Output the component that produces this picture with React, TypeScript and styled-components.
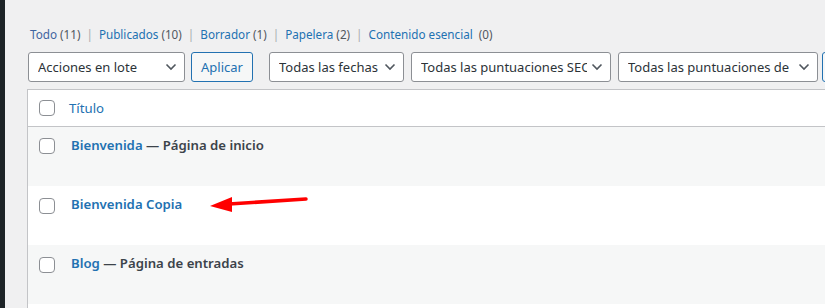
import React from 'react'
import styled, { createGlobalStyle } from 'styled-components'

const GlobalStyle = createGlobalStyle`
  html, body {
    margin: 0;
    padding: 0;
    background: #f0f0f1;
    font-family: "Noto Sans", "Open Sans", sans-serif;
    color: #3c434a;
    overflow: hidden;
  }
`

const Page = styled.div`
  display: flex;
  width: 825px;
  height: 308px;
  overflow: hidden;
`

const AdminMenu = styled.div`
  width: 5px;
  flex-shrink: 0;
  background: #1d2327;
`

const Content = styled.div`
  position: relative;
  flex: 1;
  padding: 25px 0 0 22px;
  min-width: 0;
`

const Views = styled.ul`
  display: flex;
  align-items: center;
  margin: 0 0 0 3px;
  padding: 0;
  list-style: none;
  font-size: 11.7px;
  line-height: 18px;
  white-space: nowrap;
`

const View = styled.li`
  display: flex;
  align-items: center;

  & + &::before {
    content: '|';
    color: #a7aaad;
    margin: 0 6px 0 6px;
  }
`

const ViewLink = styled.a<{ $current?: boolean }>`
  color: ${({ $current }) => ($current ? '#3f64a0' : '#2271b1')};
  text-decoration: none;
`

const Count = styled.span<{ $gap?: boolean }>`
  color: #50575e;
  margin-left: ${({ $gap }) => ($gap ? '6px' : '3px')};
`

const Toolbar = styled.div`
  display: flex;
  align-items: center;
  margin-top: 9px;
  height: 30px;
  white-space: nowrap;
`

const Select = styled.div<{ $w: number; $gap: number }>`
  display: flex;
  align-items: center;
  justify-content: space-between;
  box-sizing: border-box;
  width: ${({ $w }) => $w}px;
  height: 30px;
  margin-left: ${({ $gap }) => $gap}px;
  padding: 0 7px 0 9px;
  border: 1px solid #8c8f94;
  border-radius: 3px;
  background: #fff;
  color: #2c3338;
  font-size: 13px;
  flex-shrink: 0;
  overflow: hidden;

  span {
    overflow: hidden;
    white-space: nowrap;
  }
  svg {
    flex-shrink: 0;
    margin-left: 4px;
  }
`

const Button = styled.div<{ $gap: number; $w?: number }>`
  display: flex;
  align-items: center;
  justify-content: center;
  box-sizing: border-box;
  width: ${({ $w }) => ($w ? `${$w}px` : 'auto')};
  height: 30px;
  margin-left: ${({ $gap }) => $gap}px;
  padding: 0 10px;
  border: 1px solid #2271b1;
  border-radius: 3px;
  background: #f6f7f7;
  color: #2271b1;
  font-size: 13px;
  flex-shrink: 0;
`

const Table = styled.div`
  margin-top: 7px;
  width: 840px;
  border: 1px solid #c3c4c7;
  border-right: none;
  background: #fff;
`

const HeadRow = styled.div`
  display: flex;
  align-items: center;
  height: 36px;
  border-bottom: 1px solid #c3c4c7;
`

const Row = styled.div<{ $alt?: boolean }>`
  display: flex;
  align-items: flex-start;
  height: 59px;
  background: ${({ $alt }) => ($alt ? '#f6f7f7' : '#fff')};
`

const Check = styled.span<{ $top?: number }>`
  box-sizing: border-box;
  width: 16px;
  height: 16px;
  margin: ${({ $top }) => $top ?? 0}px 0 0 11px;
  border: 1px solid #8c8f94;
  border-radius: 4px;
  background: #fff;
  flex-shrink: 0;
`

const HeadTitle = styled.a`
  margin-left: 14px;
  color: #2271b1;
  font-size: 13.2px;
  text-decoration: none;
`

const RowTitle = styled.div`
  margin: 8px 0 0 16px;
  font-size: 13.2px;
  font-weight: 600;
  line-height: 20px;
  color: #3c434a;
  white-space: nowrap;

  a {
    color: #2271b1;
    text-decoration: none;
  }
`

const Arrow = styled.svg`
  position: absolute;
  left: 200px;
  top: 192px;
`

const Chevron = () => (
  <svg width="12" height="8" viewBox="0 0 12 8">
    <path d="M1.5 1.5 L6 6 L10.5 1.5" fill="none" stroke="#50575e" strokeWidth="1.6" />
  </svg>
)

const views = [
  { label: 'Todo', count: 11, current: true },
  { label: 'Publicados', count: 10 },
  { label: 'Borrador', count: 1 },
  { label: 'Papelera', count: 2 },
  { label: 'Contenido esencial', count: 0, gap: true },
]

export default function App() {
  return (
    <Page>
      <GlobalStyle />
      <AdminMenu />
      <Content>
        <Views>
          {views.map((v) => (
            <View key={v.label}>
              <ViewLink $current={v.current}>{v.label}</ViewLink>
              <Count $gap={v.gap}>({v.count})</Count>
            </View>
          ))}
        </Views>

        <Toolbar>
          <Select $w={157} $gap={1}>
            <span>Acciones en lote</span>
            <Chevron />
          </Select>
          <Button $gap={6} $w={62}>Aplicar</Button>
          <Select $w={135} $gap={16}>
            <span>Todas las fechas</span>
            <Chevron />
          </Select>
          <Select $w={200} $gap={7}>
            <span>Todas las puntuaciones SEO</span>
            <Chevron />
          </Select>
          <Select $w={200} $gap={7}>
            <span>Todas las puntuaciones de</span>
            <Chevron />
          </Select>
          <Button $gap={4}>Filtrar</Button>
        </Toolbar>

        <Table>
          <HeadRow>
            <Check />
            <HeadTitle>Título</HeadTitle>
          </HeadRow>
          <Row $alt>
            <Check $top={11} />
            <RowTitle>
              <a>Bienvenida</a> — Página de inicio
            </RowTitle>
          </Row>
          <Row>
            <Check $top={12} />
            <RowTitle>
              <a>Bienvenida Copia</a>
            </RowTitle>
          </Row>
          <Row $alt>
            <Check $top={12} />
            <RowTitle>
              <a>Blog</a> — Página de entradas
            </RowTitle>
          </Row>
          <Row />
        </Table>

        <Arrow width="110" height="24" viewBox="0 0 110 24">
          <path d="M101 7 L24 12" stroke="#f00" strokeWidth="3.5" strokeLinecap="round" />
          <path d="M5 14 L27 5 L27 20 Z" fill="#f00" />
        </Arrow>
      </Content>
    </Page>
  )
}
